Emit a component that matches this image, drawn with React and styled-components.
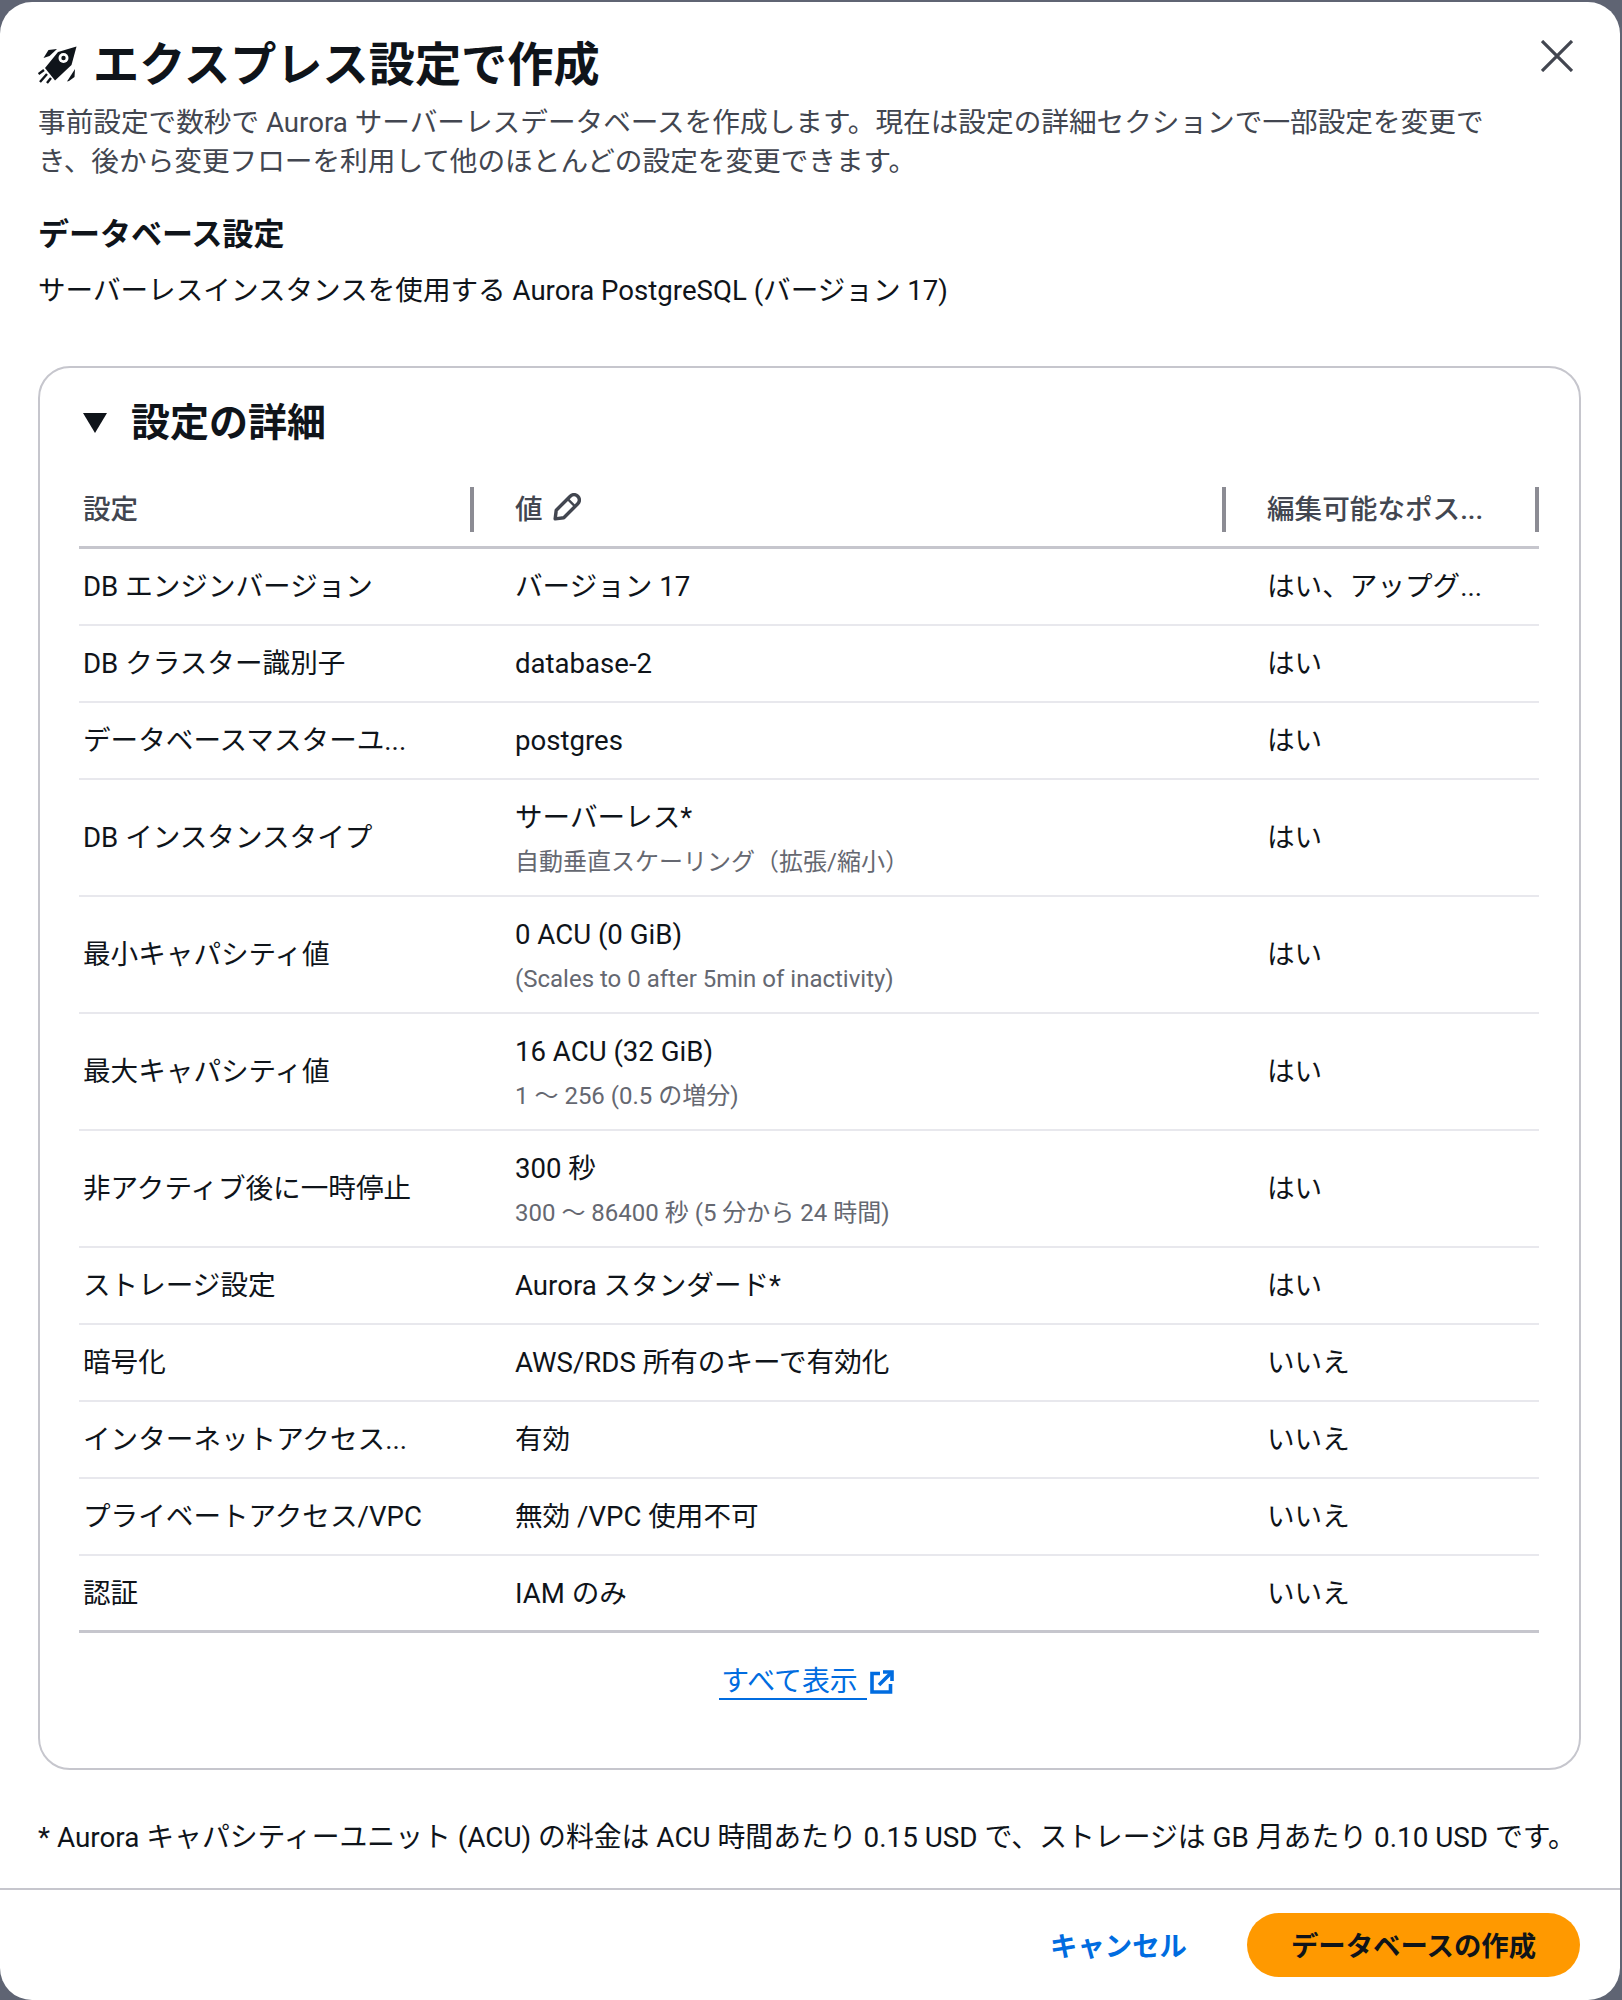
import React from "react";
import styled, { createGlobalStyle } from "styled-components";

const GlobalStyle = createGlobalStyle`
  * {
    box-sizing: border-box;
  }
  html, body {
    margin: 0;
    padding: 0;
    background-color: #5f6473;
  }
  body {
    font-family: Roboto, "Noto Sans CJK JP", sans-serif;
    color: #0f141a;
  }
`;

const Dialog = styled.div`
  width: 1620px;
  height: 1998px;
  margin-top: 2px;
  background-color: #ffffff;
  border-radius: 32px;
  display: flex;
  flex-direction: column;
`;

const Content = styled.div`
  flex: 1;
  padding: 36px 39px 0 38px;
`;

const Header = styled.div`
  display: flex;
  justify-content: space-between;
  align-items: flex-start;
  height: 65px;
`;

const Title = styled.h1`
  margin: 0;
  display: flex;
  align-items: center;
  gap: 15px;
  font-size: 46.2px;
  line-height: 54px;
  font-weight: 700;
`;

const CloseButton = styled.button`
  border: none;
  background: none;
  padding: 0;
  margin: 2px 8px 0 0;
  color: #424650;
  display: flex;
`;

const Description = styled.p`
  margin: 0;
  max-width: 1490px;
  font-size: 27.65px;
  line-height: 39px;
  color: #424650;
`;

const SectionTitle = styled.h2`
  margin: 31.5px 0 0;
  font-size: 31px;
  line-height: 44px;
  font-weight: 700;
`;

const SectionText = styled.p`
  margin: 14px 0 0;
  font-size: 27.6px;
  line-height: 40px;
`;

const Card = styled.section`
  margin-top: 55px;
  height: 1404px;
  border: 2px solid #c6c6cd;
  border-radius: 32px;
  padding: 0 39px;
`;

const CardHeader = styled.div`
  height: 86px;
  padding: 24px 0 0 4px;
  display: flex;
  align-items: center;
  gap: 24px;
`;

const CardTitle = styled.h3`
  margin: 0;
  font-size: 39px;
  font-weight: 700;
  line-height: 50px;
`;

const Table = styled.div`
  display: flex;
  flex-direction: column;
  width: 1460px;
  margin-top: 33px;
`;

const HeaderRow = styled.div`
  display: grid;
  grid-template-columns: 395px 752px 313px;
  height: 62px;
  border-bottom: 3px solid #c6c6cd;
  padding-bottom: 19px;
`;

const HeaderCell = styled.div`
  display: flex;
  align-items: center;
  gap: 10px;
  padding: 0 0 5px ${(p) => p.$inset}px;
  font-size: 27.6px;
  font-weight: 500;
  color: #424650;
  border-right: 4px solid #8c8c94;
  white-space: nowrap;
`;

const Row = styled.div`
  display: grid;
  grid-template-columns: 395px 752px 313px;
  align-items: center;
  height: ${(p) => (p.$tall ? 117 : 77)}px;
  border-bottom: ${(p) => (p.$last ? "3px solid #c6c6cd" : "2px solid #e8e8ed")};
  font-size: 27.6px;
  line-height: 40px;
`;

const Cell = styled.div`
  padding: 2px 0 0 ${(p) => p.$inset}px;
  white-space: nowrap;
`;

const ValueCell = styled(Cell)`
  padding-top: ${(p) => (p.$tall ? 5 : 2)}px;
`;

const SubText = styled.div`
  font-size: 24px;
  line-height: 40px;
  color: #656871;
  margin-top: 4px;
`;

const LinkRow = styled.div`
  display: flex;
  justify-content: center;
  align-items: center;
  gap: 3px;
  margin-top: 32px;
  padding-right: 6px;
`;

const ViewAll = styled.a`
  font-size: 27.9px;
  line-height: 33px;
  padding: 0 9px 0 2px;
  color: #006ce0;
  border-bottom: 2px solid #006ce0;
`;

const Note = styled.p`
  margin: 48px 0 0;
  font-size: 27.85px;
  line-height: 40px;
  white-space: nowrap;
`;

const Footer = styled.div`
  height: 112px;
  border-top: 2px solid #c6c6cd;
  display: flex;
  align-items: center;
  justify-content: flex-end;
  gap: 60px;
  padding: 0 40px 0 0;
`;

const CancelButton = styled.button`
  border: none;
  background: none;
  padding: 3px 0 0;
  font-family: inherit;
  font-size: 27.4px;
  line-height: 36px;
  font-weight: 700;
  color: #006ce0;
`;

const PrimaryButton = styled.button`
  width: 333px;
  height: 64px;
  border: none;
  border-radius: 32px;
  padding: 3px 0 0;
  background-color: #ff9900;
  font-family: inherit;
  font-size: 27.4px;
  line-height: 36px;
  font-weight: 700;
  color: #0f141a;
`;

const RocketIcon = () => (
  <svg width="40" height="38" viewBox="8 9 40 38" fill="#0f141a">
    <path d="M46.5 9.5 L28 15 L15 31 L25 43.5 L41.5 28 Z" />
    <circle cx="33.5" cy="21" r="5" fill="#fff" />
    <circle cx="33.5" cy="21" r="2.2" />
    <path d="M13.5 21 L18.5 13 L27 12 L19.5 19 Z" />
    <path d="M37 44.5 L45 32 L44.5 40 L39 44 Z" />
    <path d="M8.5 37 L14 33 M10 45 L17 37 M17 46 L21 41" fill="none" stroke="#0f141a" strokeWidth="2.4" />
  </svg>
);

const CloseIcon = () => (
  <svg width="32" height="32" viewBox="0 0 32 32" fill="none" stroke="currentColor" strokeWidth="3.2">
    <path d="M1 1 L31 31 M31 1 L1 31" />
  </svg>
);

const PencilIcon = () => (
  <svg width="28" height="28" viewBox="0 0 26 26" fill="none" stroke="#424650" strokeWidth="3.2" strokeLinejoin="round">
    <path d="M2 24 L3 16 L16 3 C18 1 21 1 23 3 C25 5 25 8 23 10 L10 23 Z" />
    <path d="M14 6 L20 12" strokeWidth="2.2" />
  </svg>
);

const ExternalIcon = () => (
  <svg width="24" height="24" viewBox="0 0 24 24" fill="none" stroke="#006ce0" strokeWidth="3.6">
    <path d="M10 3.5 H2 V22 H20.5 V14" />
    <path d="M9 15 L22 2" />
    <path d="M13 2 H22 V11" />
  </svg>
);

const TriangleIcon = () => (
  <svg width="24" height="20" viewBox="0 0 24 20" fill="#0f141a">
    <path d="M0 0 H24 L12 20 Z" />
  </svg>
);

const rows = [
  { name: "DB エンジンバージョン", value: "バージョン 17", edit: "はい、アップグ..." },
  { name: "DB クラスター識別子", value: "database-2", edit: "はい" },
  { name: "データベースマスターユ...", value: "postgres", edit: "はい" },
  { name: "DB インスタンスタイプ", value: "サーバーレス*", sub: "自動垂直スケーリング（拡張/縮小）", edit: "はい" },
  { name: "最小キャパシティ値", value: "0 ACU (0 GiB)", sub: "(Scales to 0 after 5min of inactivity)", edit: "はい" },
  { name: "最大キャパシティ値", value: "16 ACU (32 GiB)", sub: "1 ～ 256 (0.5 の増分)", edit: "はい" },
  { name: "非アクティブ後に一時停止", value: "300 秒", sub: "300 ～ 86400 秒 (5 分から 24 時間)", edit: "はい" },
  { name: "ストレージ設定", value: "Aurora スタンダード*", edit: "はい" },
  { name: "暗号化", value: "AWS/RDS 所有のキーで有効化", edit: "いいえ" },
  { name: "インターネットアクセス...", value: "有効", edit: "いいえ" },
  { name: "プライベートアクセス/VPC", value: "無効 /VPC 使用不可", edit: "いいえ" },
  { name: "認証", value: "IAM のみ", edit: "いいえ" },
];

export default function App() {
  return (
    <>
      <GlobalStyle />
      <Dialog>
        <Content>
          <Header>
            <Title>
              <RocketIcon />
              エクスプレス設定で作成
            </Title>
            <CloseButton>
              <CloseIcon />
            </CloseButton>
          </Header>
          <Description>
            事前設定で数秒で Aurora サーバーレスデータベースを作成します。現在は設定の詳細セクションで一部設定を変更でき、後から変更フローを利用して他のほとんどの設定を変更できます。
          </Description>
          <SectionTitle>データベース設定</SectionTitle>
          <SectionText>サーバーレスインスタンスを使用する Aurora PostgreSQL (バージョン 17)</SectionText>
          <Card>
            <CardHeader>
              <TriangleIcon />
              <CardTitle>設定の詳細</CardTitle>
            </CardHeader>
            <Table>
              <HeaderRow>
                <HeaderCell $inset={4}>設定</HeaderCell>
                <HeaderCell $inset={41}>
                  値 <PencilIcon />
                </HeaderCell>
                <HeaderCell $inset={41}>編集可能なポス...</HeaderCell>
              </HeaderRow>
              {rows.map((row, i) => (
                <Row key={row.name} $tall={!!row.sub} $last={i === rows.length - 1}>
                  <Cell $inset={4}>{row.name}</Cell>
                  <ValueCell $inset={41} $tall={!!row.sub}>
                    {row.value}
                    {row.sub && <SubText>{row.sub}</SubText>}
                  </ValueCell>
                  <Cell $inset={41}>{row.edit}</Cell>
                </Row>
              ))}
            </Table>
            <LinkRow>
              <ViewAll>すべて表示</ViewAll>
              <ExternalIcon />
            </LinkRow>
          </Card>
          <Note>
            * Aurora キャパシティーユニット (ACU) の料金は ACU 時間あたり 0.15 USD で、ストレージは GB 月あたり 0.10 USD です。
          </Note>
        </Content>
        <Footer>
          <CancelButton>キャンセル</CancelButton>
          <PrimaryButton>データベースの作成</PrimaryButton>
        </Footer>
      </Dialog>
    </>
  );
}
